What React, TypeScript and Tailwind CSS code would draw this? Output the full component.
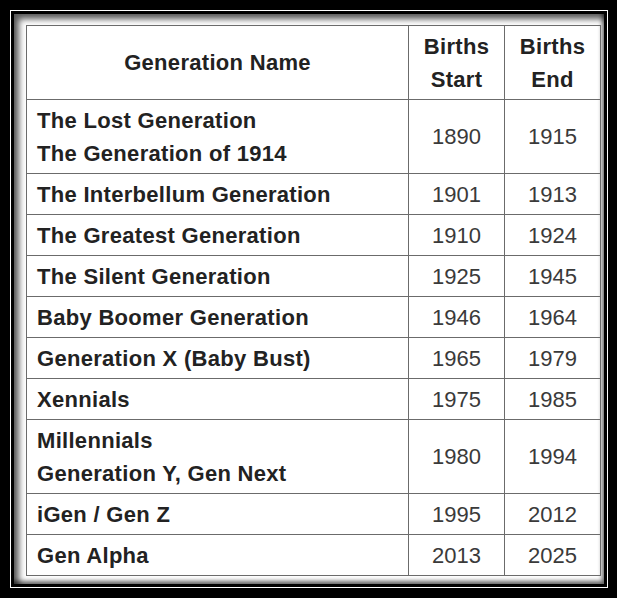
const rows: { name: string[]; start: string; end: string }[] = [
  { name: ["The Lost Generation", "The Generation of 1914"], start: "1890", end: "1915" },
  { name: ["The Interbellum Generation"], start: "1901", end: "1913" },
  { name: ["The Greatest Generation"], start: "1910", end: "1924" },
  { name: ["The Silent Generation"], start: "1925", end: "1945" },
  { name: ["Baby Boomer Generation"], start: "1946", end: "1964" },
  { name: ["Generation X (Baby Bust)"], start: "1965", end: "1979" },
  { name: ["Xennials"], start: "1975", end: "1985" },
  { name: ["Millennials", "Generation Y, Gen Next"], start: "1980", end: "1994" },
  { name: ["iGen / Gen Z"], start: "1995", end: "2012" },
  { name: ["Gen Alpha"], start: "2013", end: "2025" },
];

export default function App() {
  return (
    <div
      className="h-[598px] w-[617px] bg-black pl-[10px] pt-[10px]"
      style={{ fontFamily: '"Liberation Sans", Arial, sans-serif' }}
    >
      <div className="h-[578px] w-[598px] border border-white bg-black p-[3px]">
        <div className="h-full w-full bg-white pb-[8px] pl-[12px] pr-[3px] pt-[11px] shadow-[inset_5px_5px_6px_rgba(0,0,0,0.65),inset_-2px_-3px_4px_rgba(0,0,0,0.6)]">
          <table className="w-[574px] table-fixed border-collapse border border-[#6b6b6b] text-[22px] leading-[33px]">
            <colgroup>
              <col className="w-[382px]" />
              <col className="w-[96px]" />
              <col className="w-[96px]" />
            </colgroup>
            <thead>
              <tr className="h-[74px]">
                <th className="border border-[#6b6b6b] text-center font-bold tracking-[0.3px] text-[#222]">
                  Generation Name
                </th>
                <th className="border border-[#6b6b6b] text-center font-bold tracking-[0.3px] text-[#222]">
                  Births
                  <br />
                  Start
                </th>
                <th className="border border-[#6b6b6b] text-center font-bold tracking-[0.3px] text-[#222]">
                  Births
                  <br />
                  End
                </th>
              </tr>
            </thead>
            <tbody>
              {rows.map((r) => (
                <tr key={r.start} className={r.name.length > 1 ? "h-[74px]" : "h-[41px]"}>
                  <td className="border border-[#6b6b6b] pl-[10px] font-bold tracking-[0.3px] text-[#222]">
                    {r.name.map((line, i) => (
                      <div key={i}>{line}</div>
                    ))}
                  </td>
                  <td className="border border-[#6b6b6b] text-center text-[#3a3a3a]">{r.start}</td>
                  <td className="border border-[#6b6b6b] text-center text-[#3a3a3a]">{r.end}</td>
                </tr>
              ))}
            </tbody>
          </table>
        </div>
      </div>
    </div>
  );
}
